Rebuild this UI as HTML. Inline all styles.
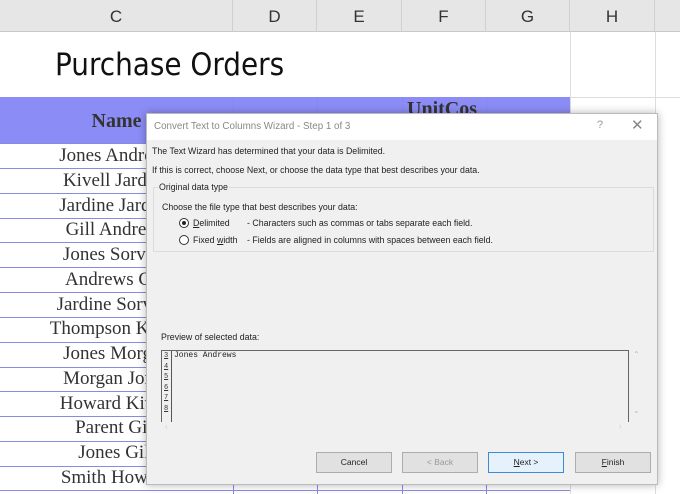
<!DOCTYPE html>
<html><head><style>
*{margin:0;padding:0;box-sizing:border-box}
body{width:680px;height:494px;overflow:hidden;background:#fff;position:relative;font-family:"Liberation Sans",sans-serif}
.a{position:absolute}
.hdr{top:0;height:32px;background:#e6e6e6;border-bottom:1px solid #c8c8c8;color:#333;font-size:17px;text-align:center;line-height:34px;border-right:1px solid #d0d0d0}
.vl{position:absolute;width:1px;background:#8888ee}
.hl{position:absolute;left:0;width:570px;height:1px;background:#8a8ae0}
.nm{position:absolute;left:0;width:233px;text-align:center;font-family:"Liberation Serif",serif;font-size:19px;color:#333;height:24px;line-height:24px}
.dl{font-family:"Liberation Sans",sans-serif;font-size:8.8px;color:#222}
.btn{position:absolute;top:452px;height:21px;background:#e1e1e1;border:1px solid #adadad;font-size:8.5px;text-align:center;line-height:19px;color:#222}
</style></head><body>
<div class="a hdr" style="left:0;width:233px">C</div>
<div class="a hdr" style="left:233px;width:84px">D</div>
<div class="a hdr" style="left:317px;width:85px">E</div>
<div class="a hdr" style="left:402px;width:84px">F</div>
<div class="a hdr" style="left:486px;width:84px">G</div>
<div class="a hdr" style="left:570px;width:85px">H</div>
<div class="a hdr" style="left:655px;width:30px"></div>
<div class="a" style="left:570px;top:32px;width:1px;height:462px;background:#ddd"></div>
<div class="a" style="left:655px;top:32px;width:1px;height:462px;background:#ddd"></div>
<div class="a" style="left:570px;top:97px;width:110px;height:1px;background:#ddd"></div>
<div class="a" style="left:55px;top:47px;font-size:31px;color:#111;font-family:'DejaVu Sans Condensed','Liberation Sans Narrow','Liberation Sans',sans-serif">Purchase Orders</div>
<div class="a" style="left:0;top:97px;width:570px;height:46px;background:#8c8cf6"></div>
<div class="vl" style="left:233px;top:97px;height:397px"></div>
<div class="vl" style="left:317px;top:97px;height:397px"></div>
<div class="vl" style="left:402px;top:97px;height:397px"></div>
<div class="vl" style="left:486px;top:97px;height:397px"></div>
<div class="a" style="left:0;top:110px;width:233px;text-align:center;font:bold 20px 'Liberation Serif',serif;color:#333">Name</div>
<div class="a" style="left:407px;top:98px;font:bold 20px 'Liberation Serif',serif;color:#333">UnitCos</div>
<div class="hl" style="top:143px"></div><div class="hl" style="top:168px"></div><div class="hl" style="top:193px"></div><div class="hl" style="top:218px"></div><div class="hl" style="top:242px"></div><div class="hl" style="top:267px"></div><div class="hl" style="top:292px"></div><div class="hl" style="top:317px"></div><div class="hl" style="top:342px"></div><div class="hl" style="top:367px"></div><div class="hl" style="top:391px"></div><div class="hl" style="top:416px"></div><div class="hl" style="top:441px"></div><div class="hl" style="top:466px"></div><div class="hl" style="top:490px"></div>
<div class="nm" style="top:144px">Jones Andrews</div>
<div class="nm" style="top:169px">Kivell Jardine</div>
<div class="nm" style="top:194px">Jardine Jardine</div>
<div class="nm" style="top:218px">Gill Andrews</div>
<div class="nm" style="top:243px">Jones Sorvino</div>
<div class="nm" style="top:268px">Andrews Gill</div>
<div class="nm" style="top:293px">Jardine Sorvino</div>
<div class="nm" style="top:317px">Thompson Kivell</div>
<div class="nm" style="top:342px">Jones Morgan</div>
<div class="nm" style="top:367px">Morgan Jones</div>
<div class="nm" style="top:392px">Howard Kivell</div>
<div class="nm" style="top:416px">Parent Gill</div>
<div class="nm" style="top:441px">Jones Gill</div>
<div class="nm" style="top:466px">Smith Howard</div>
<div class="a" style="left:233px;top:466px;width:84px;text-align:center;font:19px 'Liberation Serif',serif;color:#333;line-height:24px">Desk</div>
<div class="a" style="left:317px;top:466px;width:80px;text-align:right;font:19px 'Liberation Serif',serif;color:#333;line-height:24px">2</div>
<div class="a" style="left:402px;top:466px;width:80px;text-align:right;font:19px 'Liberation Serif',serif;color:#333;line-height:24px">125</div>
<div class="a" style="left:486px;top:466px;width:80px;text-align:right;font:19px 'Liberation Serif',serif;color:#333;line-height:24px">250</div>

<div class="a" style="left:146px;top:113px;width:512px;height:372px;background:#f0f0f0;border:1px solid #bbb;box-shadow:0 0 8px rgba(0,0,0,.3)">
 <div class="a" style="left:0;top:0;width:510px;height:26px;background:#fff"></div>
 <div class="a" style="left:7px;top:7px;font-size:9.8px;color:#888">Convert Text to Columns Wizard - Step 1 of 3</div>
 <div class="a" style="left:450px;top:5px;font-size:11px;color:#999">?</div>
 <div class="a" style="left:484px;top:2px;font-size:15px;color:#888">✕</div>
 <div class="a dl" style="left:5px;top:32px">The Text Wizard has determined that your data is Delimited.</div>
 <div class="a dl" style="left:5px;top:51px">If this is correct, choose Next, or choose the data type that best describes your data.</div>
 <div class="a" style="left:6px;top:73px;width:501px;height:65px;border:1px solid #dcdcdc"></div>
 <div class="a dl" style="left:11px;top:68px;background:#f0f0f0;padding:0 1px">Original data type</div>
 <div class="a dl" style="left:15px;top:88px">Choose the file type that best describes your data:</div>
 <div class="a" style="left:32px;top:104px;width:10px;height:10px;border:1px solid #333;border-radius:50%;background:#fff"><div style="margin:2px;width:4px;height:4px;border-radius:50%;background:#222"></div></div>
 <div class="a dl" style="left:46px;top:104px"><u>D</u>elimited</div>
 <div class="a dl" style="left:100px;top:104px">- Characters such as commas or tabs separate each field.</div>
 <div class="a" style="left:32px;top:121px;width:10px;height:10px;border:1px solid #333;border-radius:50%;background:#fff"></div>
 <div class="a dl" style="left:46px;top:121px">Fixed <u>w</u>idth</div>
 <div class="a dl" style="left:100px;top:121px">- Fields are aligned in columns with spaces between each field.</div>
 <div class="a dl" style="left:14px;top:218px">Preview of selected data:</div>
 <div class="a" style="left:14px;top:236px;width:468px;height:72px;border:1px solid #666;border-bottom:none;background:#f0f0f0"></div>
 <div class="a" style="left:15px;top:237px;width:10px;height:71px;border-right:1px solid #555;font:7px 'Liberation Mono',monospace;line-height:10.5px;color:#333;padding-left:2px;text-decoration:underline">3<br>4<br>5<br>6<br>7<br>8</div>
 <div class="a" style="left:27px;top:237px;font:8px 'Liberation Mono',monospace;color:#222">Jones Andrews</div>
 <div class="a" style="left:486px;top:236px;font-size:8px;color:#bbb">⌃</div>
 <div class="a" style="left:486px;top:292px;font-size:8px;color:#bbb">⌄</div>
 <div class="a" style="left:18px;top:308px;font-size:8px;color:#ccc">‹</div>
 <div class="a" style="left:472px;top:308px;font-size:8px;color:#ccc">›</div>
</div>
<div class="btn" style="left:316px;width:76px">Cancel</div>
<div class="btn" style="left:402px;width:76px;color:#999">&lt; Back</div>
<div class="btn" style="left:488px;width:76px;border:1.5px solid #3c8ad8;background:#e5f1fb"><u>N</u>ext &gt;</div>
<div class="btn" style="left:575px;width:76px"><u>F</u>inish</div>
</body></html>
